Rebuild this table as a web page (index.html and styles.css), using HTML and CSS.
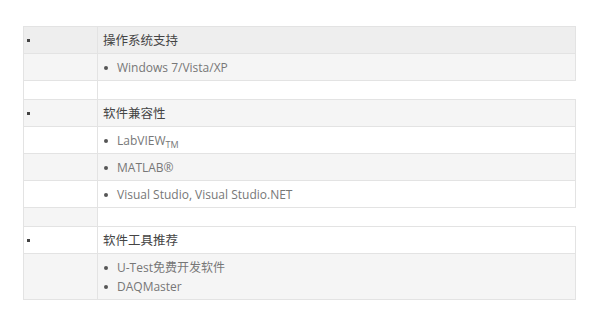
FILE: index.html
```html
<!DOCTYPE html>
<html lang="zh-CN">
<head>
<meta charset="utf-8">
<title>软件支持</title>
<link rel="stylesheet" href="styles.css">
</head>
<body>
<div class="page">
  <table class="spec">
    <tr class="head">
      <td class="mark"><span class="sq"></span></td>
      <td class="title">操作系统支持</td>
    </tr>
    <tr>
      <td class="mark"></td>
      <td class="body"><ul class="items"><li><span>Windows 7/Vista/XP</span></li></ul></td>
    </tr>
    <tr class="gap">
      <td class="mark"></td>
    </tr>
    <tr>
      <td class="mark"><span class="sq"></span></td>
      <td class="title">软件兼容性</td>
    </tr>
    <tr>
      <td class="mark"></td>
      <td class="body"><ul class="items"><li><span>LabVIEW<sub>TM</sub></span></li></ul></td>
    </tr>
    <tr>
      <td class="mark"></td>
      <td class="body"><ul class="items"><li><span>MATLAB®</span></li></ul></td>
    </tr>
    <tr>
      <td class="mark"></td>
      <td class="body"><ul class="items"><li><span>Visual Studio, Visual Studio.NET</span></li></ul></td>
    </tr>
    <tr class="gap">
      <td class="mark"></td>
    </tr>
    <tr>
      <td class="mark"><span class="sq"></span></td>
      <td class="title">软件工具推荐</td>
    </tr>
    <tr>
      <td class="mark"></td>
      <td class="body"><ul class="items"><li><span>U-Test免费开发软件</span></li><li><span>DAQMaster</span></li></ul></td>
    </tr>
  </table>
</div>
</body>
</html>
```
FILE: styles.css
```css
html, body {
  margin: 0;
  padding: 0;
  background: #ffffff;
}
body {
  font-family: "Open Sans", "Noto Sans CJK SC", sans-serif;
  font-size: 12px;
  color: #777777;
}
.page {
  padding: 26px 25px 0 23px;
}
.spec {
  width: 553px;
  border-collapse: collapse;
}
.spec td {
  border: 1px solid #e3e3e3;
  padding: 4px 4px 3px 5px;
  line-height: 19px;
  vertical-align: middle;
}
.spec tr:nth-child(even) td {
  background: #f5f5f5;
}
.spec tr.head td {
  background: #eeeeee;
}
.spec td.mark {
  width: 66px;
  padding-left: 3px;
}
.spec tr.gap td {
  padding: 0;
  height: 18px;
  line-height: 18px;
}
.sq {
  display: block;
  width: 3px;
  height: 3px;
  background: #444444;
}
.title {
  color: #444444;
  font-size: 12.5px;
}
.items {
  margin: 0;
  padding: 0;
  list-style: none;
}
.items li {
  display: flex;
  align-items: center;
  gap: 9px;
}
.items li::before {
  content: "";
  width: 4px;
  height: 4px;
  margin-left: 1px;
  border-radius: 50%;
  background: #555555;
  flex: none;
}
.items sub {
  font-size: 9px;
  line-height: 0;
  vertical-align: -3px;
}
```
